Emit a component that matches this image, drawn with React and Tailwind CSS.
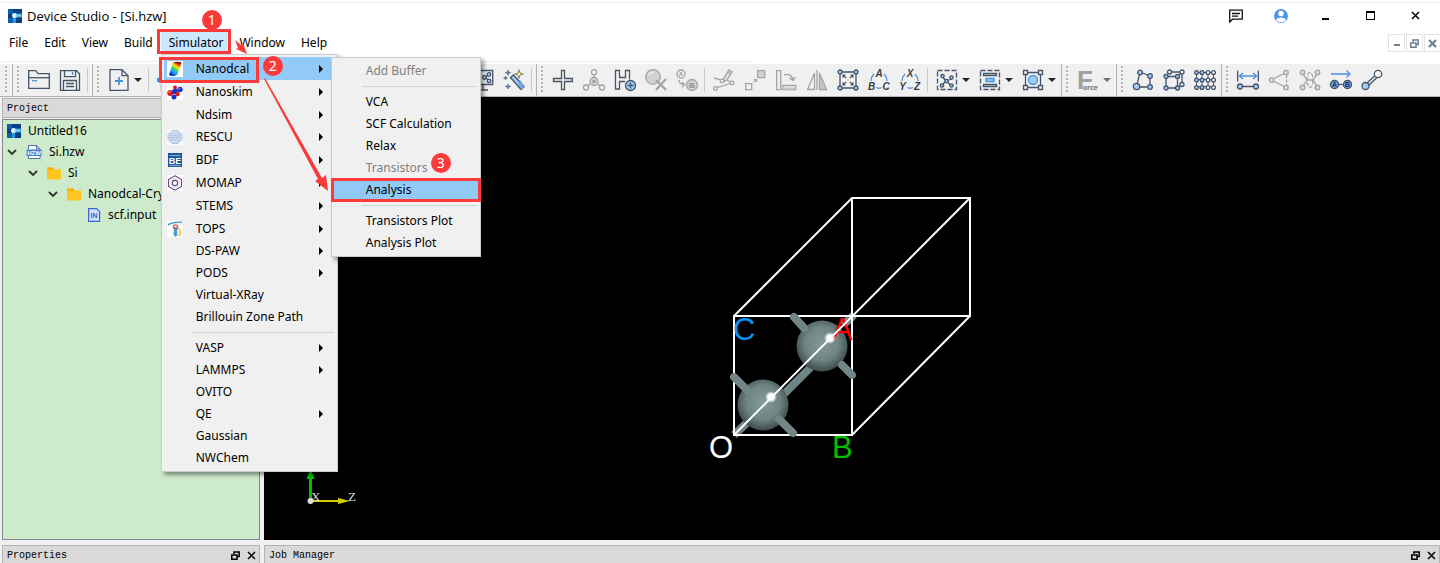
import React, { useState } from 'react';

const INK = '#44546a';
const BLUE = '#4a90e2';
const SKY = '#a3cbf7';
const DIM = '#a3a3a3';

// --- ICONS ---
const Icon = ({ children, size = 22, box = 22, stroke = INK, width = 1.3, label }) => (
  <svg width={size} height={size} viewBox={`0 0 ${box} ${box}`} fill="none" stroke={stroke} strokeWidth={width} className="shrink-0 overflow-visible" role="img" aria-label={label}>
    {children}
  </svg>
);

const Dots = ({ points, r = 2, fill = SKY }) => points.map(([x, y], i) => <circle key={i} cx={x} cy={y} r={r} fill={fill} />);

const LogoIcon = () => (
  <Icon size={14} box={14} stroke="none">
    <rect width="14" height="14" fill="#0a3f86" />
    <path d="M0 0h5v5H0zM0 9h5v5H0z" fill="#0b5ea8" />
    <path d="M5 4.500h9v4H8V14H5z" fill="#2d9bd8" />
    <circle cx="6.500" cy="6.500" r="2.500" fill="#d9f4ff" />
    <path d="M8 5.500h5v2H8z" fill="#7fd0f2" />
  </Icon>
);

const OpenIcon = () => (
  <Icon>
    <path d="M.7 19.300V1.700h7l2.500 3h11.100v14.600z" />
    <path d="M.7 8.700h20.600" />
    <path d="M4 11.700h5" stroke={BLUE} />
  </Icon>
);

const SaveIcon = () => (
  <Icon>
    <path d="M1.500 1.700h16l3 3v16.600h-19z" />
    <path d="M5.500 1.700v6h11v-6M4.500 21v-9.500h13V21M7 14.500h8M7 17.500h8" />
    <path d="M13.500 3v3" stroke={BLUE} width="2" />
  </Icon>
);

const NewIcon = () => (
  <Icon>
    <path d="M2 .7h12l6 6v14.600H2z" />
    <path d="M14 .7v6h6" />
    <path d="M11 8v8M7 12h8" stroke={BLUE} strokeWidth="1.800" />
  </Icon>
);

const ImportIcon = () => (
  <Icon>
    <path d="M0 9h6v4H0z" fill={BLUE} stroke="none" />
    <path d="M4.500 15v6h14V1h-14v5" />
  </Icon>
);

const ScreenIcon = () => (
  <Icon>
    <path d="M1.700 1.500h19v14h-19zM6 21h10M11 16v5" />
    <path d="M13 8.500l4-3M13 8.500l4 3" />
    <Dots points={[[12.500, 8.5], [17, 5.500], [17, 12]]} r={1.8} />
  </Icon>
);

const WandIcon = () => (
  <Icon>
    <path d="M7.500 8.500l3-2.500L21 17.500l-3 3z" fill={SKY} />
    <path d="M15 14l3-2.500 3 6-3 3z" fill="#6da8ea" stroke="none" />
    <path d="M16 .7l1 3.300 3.300 1-3.300 1-1 3.300-1-3.300-3.300-1 3.300-1z" fill="#fff6a8" stroke="#756b4c" strokeWidth=".800" />
    <path d="M5 1l.7 2 2 .7-2 .7L5 6.500l-.7-2-2-.8 2-.7zM2.500 7l.5 1.500 1.500.5-1.500.5-.5 1.500-.5-1.500L.5 9 2 8.500zM5 15l.7 1.700 2 .8-2 .8L5 20l-.7-1.700-2-.8 2-.8z" fill="#5b7fc0" strokeWidth=".500" />
  </Icon>
);

const AddAtomIcon = () => (
  <Icon>
    <path d="M9.500 1.500h3v8h8v3h-8v8h-3v-8h-8v-3h8z" />
  </Icon>
);

const FragmentIcon = () => (
  <Icon stroke={DIM}>
    <path d="M11 6v3M7 15l-2 2M15 15l2 2" />
    <circle cx="11" cy="12.500" r="4" fill="#d5d5d5" />
    <circle cx="11" cy="12.500" r="1.200" fill={DIM} />
    <Dots points={[[11, 3.2], [3, 18.5], [19, 18.5]]} r={2.5} fill="#f4f4f4" />
  </Icon>
);

const HydrogenIcon = () => (
  <Icon>
    <path d="M11 12.500H5.500V20h-4V1.500h4v7h6v-7h4v9" />
    <circle cx="16.500" cy="16.500" r="5" fill={SKY} />
    <path d="M16.500 13.500v6M13.500 16.500h6" />
  </Icon>
);

const DeleteAtomIcon = () => (
  <Icon stroke={DIM}>
    <circle cx="8" cy="8" r="7.300" fill="#d2d2d2" />
    <path d="M4 6a5 5 0 0 1 5-3" stroke="#ececec" strokeWidth="1.500" />
    <path d="M11 11l10 10M21 10L11 21" strokeWidth="2.200" />
  </Icon>
);

const ReplaceIcon = () => (
  <Icon stroke={DIM}>
    <circle cx="5" cy="5" r="4" />
    <path d="M3 11c0 3 2 4.500 5 4.500M6 13l2.500 2.500L6 18" />
    <circle cx="16" cy="16" r="5.500" fill="#d2d2d2" />
    <g fill="#8f8f8f" stroke="none" fontFamily="Liberation Sans, sans-serif" fontWeight="bold" textAnchor="middle">
      <text x="5" y="7" fontSize="6">A</text>
      <text x="16" y="19" fontSize="8">B</text>
    </g>
  </Icon>
);

const BondEditIcon = () => (
  <Icon stroke={DIM}>
    <path d="M3 19l16-5M1 9l8 2 3 1M19 14l-5-3" />
    <path d="M10 13l1-4 5-8 3 2-5 8zM15 3l3 2" fill="#dedede" />
    <Dots points={[[2.500, 19.500], [19, 14], [9, 12]]} r={1.8} fill="#f4f4f4" />
  </Icon>
);

const MoveIcon = () => (
  <Icon stroke={DIM}>
    <path d="M1.700 14.700h6v6h-6z" />
    <path d="M13.700 1.700h7v7h-7z" fill="#d2d2d2" />
    <path d="M9.500 13.500l3-3M10 10.500h2.500V13" strokeWidth="1.100" />
  </Icon>
);

const RotateIcon = () => (
  <Icon stroke={DIM}>
    <path d="M1.700 1.700h4v19h-4zM7.700 16.500h13v4.200h-13z" />
    <path d="M8 18.500h12.500v2H8z" fill="#c8c8c8" stroke="none" />
    <path d="M9 6c5-1.500 8 0 9 5M20.500 8L18 11.500 14.500 9" />
  </Icon>
);

const MirrorIcon = () => (
  <Icon stroke={DIM}>
    <path d="M8.500 4v16.500H1.500z" />
    <path d="M13.500 4v16.500h7z" fill="#c8c8c8" />
    <path d="M11 1v20" />
  </Icon>
);

const FitIcon = () => (
  <Icon>
    <path d="M3 3h16v16H3z" />
    <path d="M9 9L6 6m0 2.500V6h2.500M13 9l3-3m-2.500 0H16v2.500M9 13l-3 3m0-2.500V16h2.500M13 13l3 3m-2.500 0H16v-2.500" strokeWidth="1.200" />
    <Dots points={[[3, 3], [19, 3], [3, 19], [19, 19]]} />
  </Icon>
);

const LetterCycle = ({ letters }) => (
  <Icon>
    <path d="M3 12c0-3 1-5 3-7M19 12c0-3-1-5-3-7M8 18.500c2 1 4 1 6 0" stroke={BLUE} />
    <g fill="#3c3f48" stroke="none" fontFamily="Liberation Sans, sans-serif" fontStyle="italic" fontWeight="bold" fontSize="10" textAnchor="middle">
      <text x="11" y="8">{letters[0]}</text>
      <text x="3.500" y="21">{letters[1]}</text>
      <text x="18" y="21">{letters[2]}</text>
    </g>
  </Icon>
);

const SelectIcon = () => (
  <Icon>
    <rect x="1.500" y="1.500" width="19" height="19" strokeDasharray="5 2" />
    <path d="M10 12L6 7M10 12l6-2M10 12l-4 4M10 12l5 4.500M16 10l-1-3" />
    <Dots points={[[6.500, 7], [10.500, 12], [15.500, 8.500], [6, 16.500], [15.500, 16.500]]} r={1.700} />
  </Icon>
);

const AlignIcon = () => (
  <Icon>
    <rect x="1.500" y="1.500" width="19" height="19" strokeDasharray="5 2" />
    <path d="M4.500 4.500h13v2h-13zM4.500 15.500h13v2h-13z" fill="#f4f4f4" />
    <path d="M7 9.500h8v3H7z" fill={SKY} stroke={BLUE} />
  </Icon>
);

const BoundsIcon = () => (
  <Icon>
    <path d="M3.500 3.500h15v15h-15z" />
    <path d="M1.500 1.500h4v4h-4zM16.500 1.500h4v4h-4zM1.500 16.500h4v4h-4zM16.500 16.500h4v4h-4z" fill="#f4f4f4" />
    <circle cx="11" cy="11" r="4.500" fill={SKY} stroke={BLUE} />
  </Icon>
);

const ForceIcon = () => (
  <Icon stroke="none">
    <text x="0" y="20" fill="#a0a0a0" fontFamily="Liberation Sans, sans-serif" fontWeight="bold" fontSize="26">
      F<tspan dx="-10" dy="1" fontSize="7" fontStyle="italic" fill="#6f6f6f">orce</tspan>
    </text>
  </Icon>
);

const ClusterIcon = () => (
  <Icon>
    <path d="M8 3l10 4v11H4.500z" />
    <Dots points={[[8, 3.500], [18, 7], [18, 18]]} r={2.300} />
    <circle cx="4.500" cy="17.500" r="3.200" fill={SKY} />
  </Icon>
);

const CrystalIcon = () => (
  <Icon>
    <path d="M3 7.500h11.500V19H3zM7 3h12v11.500M14.500 7.500L19 3M14.500 19l4.500-3" />
    <Dots points={[[6.500, 3], [19, 3], [19, 15.500]]} fill="#f4f4f4" />
    <Dots points={[[3, 7.500], [14.500, 7.500], [3, 19], [14.500, 19]]} />
  </Icon>
);

const SuperCellIcon = () => (
  <Icon>
    <path d="M2.500 3.500h16M2.500 10.500h16M2.500 17.500h16M2.500 3v15M8 3v15M14 3v15M19.500 3v15" strokeWidth="1" />
    <Dots points={[[2.500, 3.500], [8, 3.500], [2.500, 11], [8, 11], [2.500, 18.500], [8, 18.500]]} r={1.900} />
    <Dots points={[[14, 3.500], [19.500, 3.500], [14, 11], [19.500, 11], [14, 18.500], [19.500, 18.500]]} r={1.900} fill="#fff" />
  </Icon>
);

const DistanceIcon = () => (
  <Icon>
    <path d="M.7 1.500v11M21.300 1.500v11M3 17.500h16" />
    <path d="M2.500 7h17M6 4L2.500 7 6 10M16 4l3.500 3-3.500 3" stroke={BLUE} />
    <Dots points={[[3, 17.500], [19, 17.500]]} r={2.500} />
  </Icon>
);

const AngleIcon = () => (
  <Icon stroke={DIM}>
    <path d="M3 11l15-7.500M3 11l15 7.500" />
    <path d="M18.500 6v10" strokeDasharray="3 1.500" />
    <Dots points={[[3.500, 11], [18, 3.500], [18, 18.500]]} r={2.200} fill="#e2e2e2" />
  </Icon>
);

const TorsionIcon = () => (
  <Icon stroke={DIM}>
    <path d="M3 3.500l5 7.500h6l5-7.500M3 18.500L8 11M14 11l5 7.500" />
    <ellipse cx="11" cy="11" rx="3" ry="7.500" strokeDasharray="4 1.500" />
    <Dots points={[[3.500, 3.500], [18.500, 3.500], [3.500, 18.500], [18.500, 18.500]]} r={2.300} fill="#d8d8d8" />
  </Icon>
);

const VectorIcon = () => (
  <Icon>
    <path d="M1 5h19M16.500 1.500L20 5l-3.500 3.500" stroke={BLUE} />
    <path d="M8 15.500h6" />
    <circle cx="4.500" cy="15.500" r="4" fill="#6aa9ec" />
    <circle cx="17.500" cy="15.500" r="4" fill="#6aa9ec" />
    <g fill="#26344c" stroke="none" fontFamily="Liberation Sans, sans-serif" fontWeight="bold" fontSize="7" textAnchor="middle">
      <text x="4.500" y="18">A</text>
      <text x="17.500" y="18">B</text>
    </g>
  </Icon>
);

const BondIcon = () => (
  <Icon>
    <path d="M5 15L15 5.500M7 17L17 7.500" />
    <circle cx="4.500" cy="17" r="3.500" fill={SKY} />
    <circle cx="17" cy="5" r="3.700" fill="#f8f8f8" />
  </Icon>
);

const RestoreIcon = ({ color = '#000' }) => (
  <Icon size={9} box={9} stroke={color} width={1.5}>
    <path d="M3 3V1h5.200v4.500H6M.8 4h5.200v4.200H.8z" />
  </Icon>
);

const CloseIcon = ({ color = '#000', width = 1.5 }) => (
  <Icon size={9} box={9} stroke={color} width={width}>
    <path d="M1 1l7 7M8 1L1 8" />
  </Icon>
);

// --- MENU ICONS ---
const NanodcalIcon = () => (
  <Icon size={16} box={16} stroke="none">
    <defs>
      <linearGradient id="tube" x1=".9" y1="0" x2=".2" y2="1">
        <stop offset="0" stopColor="#8c0000" />
        <stop offset=".2" stopColor="#ff3c00" />
        <stop offset=".38" stopColor="#ffe600" />
        <stop offset=".55" stopColor="#35d76b" />
        <stop offset=".75" stopColor="#1a9cff" />
        <stop offset="1" stopColor="#0000a8" />
      </linearGradient>
    </defs>
    <rect width="16" height="16" fill="#fff" />
    <path d="M6 1.500Q11 .2 14.500 1.500L10 14Q6 16 2 14z" fill="url(#tube)" />
    <path d="M6.500 1.500q4-1.200 7.500.3-3 1.500-7.500-.3z" fill="#6b1200" />
  </Icon>
);

const NanoskimIcon = () => (
  <Icon size={16} box={16} stroke="none">
    <rect width="16" height="16" fill="#fff" />
    <circle cx="8" cy="3.500" r="2" fill="#e01818" />
    <circle cx="3.200" cy="9" r="3" fill="#e01818" />
    <circle cx="8" cy="7.500" r="2.800" fill="#1631c8" />
    <circle cx="13" cy="5.500" r="2.700" fill="#1631c8" />
    <circle cx="10.500" cy="10" r="2.200" fill="#e01818" />
    <circle cx="7" cy="13" r="2.500" fill="#1631c8" />
    <circle cx="2.500" cy="8" r=".9" fill="#ff9c9c" />
    <circle cx="12.500" cy="4.500" r=".8" fill="#94a8ff" />
  </Icon>
);

const RescuIcon = () => (
  <Icon size={16} box={16} stroke="#a9bfdf" width={0.9}>
    <rect width="16" height="16" fill="#f6f9fd" stroke="none" />
    <path d="M5 1.500h6l4 4v5l-4 4H5l-4-4v-5z" fill="#dce7f5" />
    <path d="M2 6h12M2 8.500h12M3 11h10M5 4h6l2 3v4l-3 3H6l-3-3V7z" />
    <circle cx="8" cy="9" r="2.500" />
  </Icon>
);

const BdfIcon = () => (
  <Icon size={16} box={16} stroke="none">
    <rect x="1" y="1" width="14" height="14" fill="#17529b" />
    <path d="M2.500 3.500h11" stroke="#7ea5d6" />
    <text x="8" y="12" fill="#fff" fontFamily="Liberation Sans, sans-serif" fontWeight="bold" fontSize="9" textAnchor="middle">BE</text>
    <path d="M2.500 13.500h11" stroke="#7ea5d6" />
  </Icon>
);

const MomapIcon = () => (
  <Icon size={16} box={16} stroke="#6a4a7c" width={1.1}>
    <rect width="16" height="16" fill="#fff" stroke="none" />
    <path d="M8 .8l6.500 3.700v7L8 15.200 1.500 11.500v-7z" />
    <circle cx="8" cy="8" r="4.200" stroke="#cdbfd4" strokeWidth=".800" />
    <circle cx="8" cy="8" r="2.600" />
  </Icon>
);

const TopsIcon = () => (
  <Icon size={16} box={16} stroke="none">
    <rect width="16" height="16" fill="#fff" />
    <path d="M1 4c4-3 9-3 14-2.500" stroke="#4b9fd8" strokeWidth="1.600" />
    <path d="M7 6h3l.5 8-2 2-2-2z" fill="#4b9fd8" />
    <circle cx="8.500" cy="6" r="2.200" stroke="#d9534f" strokeWidth="1.200" />
    <path d="M11 8c3 0 3 2.500 1 3 3 .5 2 3.500-1 3.500" stroke="#f0c04a" strokeWidth="1.300" />
  </Icon>
);

// --- DATA ---
const MENUS_LEFT = ['File', 'Edit', 'View', 'Build'];
const MENUS_RIGHT = ['Window', 'Help'];

const SIMULATORS = [
  { name: 'Nanodcal', icon: NanodcalIcon, sub: true, tall: true },
  { name: 'Nanoskim', icon: NanoskimIcon, sub: true, tall: true },
  { name: 'Ndsim', sub: true, tall: true },
  { name: 'RESCU', icon: RescuIcon, sub: true },
  { name: 'BDF', icon: BdfIcon, sub: true, tall: true },
  { name: 'MOMAP', icon: MomapIcon, sub: true, tall: true },
  { name: 'STEMS', sub: true, tall: true },
  { name: 'TOPS', icon: TopsIcon, sub: true, tall: true },
  { name: 'DS-PAW', sub: true },
  { name: 'PODS', sub: true },
  { name: 'Virtual-XRay' },
  { name: 'Brillouin Zone Path' },
  null,
  { name: 'VASP', sub: true },
  { name: 'LAMMPS', sub: true },
  { name: 'OVITO' },
  { name: 'QE', sub: true },
  { name: 'Gaussian' },
  { name: 'NWChem' },
];

const NANODCAL_ITEMS = [
  { name: 'Add Buffer', disabled: true },
  null,
  { name: 'VCA' },
  { name: 'SCF Calculation' },
  { name: 'Relax' },
  { name: 'Transistors', disabled: true },
  { name: 'Analysis', marked: true },
  null,
  { name: 'Transistors Plot' },
  { name: 'Analysis Plot' },
];

// --- TOOLBAR ---
const Grip = () => <span className="mx-1 h-7 w-0.5 bg-[repeating-linear-gradient(to_bottom,#b4b4b4_0_2px,transparent_2px_4px)]" />;
const Divider = () => <span className="ml-0.5 mr-[3px] h-6 w-px bg-[#c8c8c8]" />;

const Tool = ({ label, children, menu, disabled }) => (
  <button type="button" aria-label={label} disabled={disabled} className="flex h-8 shrink-0 items-center">
    <span className="flex w-[31px] justify-center">{children}</span>
    {menu && <span className={`mr-1 h-0 w-2 border-x-4 border-t-4 border-x-transparent ${disabled ? 'border-t-[#6f6f6f]' : 'border-t-[#222]'}`} />}
  </button>
);

const ToolGroup = ({ children, className = '' }) => (
  <div className={`flex shrink-0 items-center border-r border-[#b0b0b0] pr-px ${className}`}>
    <Grip />
    {children}
  </div>
);

const Toolbar = () => (
  <div className="flex h-[33px] shrink-0 overflow-hidden border-b border-[#b0b0b0] bg-[#f0f0f0] pl-px">
    <ToolGroup />
    <ToolGroup>
      <Tool label="Open"><OpenIcon /></Tool>
      <Tool label="Save"><SaveIcon /></Tool>
      <Divider />
    </ToolGroup>
    <ToolGroup className="w-[444px]">
      <Tool label="New" menu><NewIcon /></Tool>
      <Divider />
      <Tool label="Import"><ImportIcon /></Tool>
      <span className="flex-1" />
      <Tool label="Display"><ScreenIcon /></Tool>
      <Tool label="Clean"><WandIcon /></Tool>
      <Divider />
    </ToolGroup>
    <ToolGroup>
      <Tool label="Add atom"><AddAtomIcon /></Tool>
      <Tool label="Add fragment" disabled><FragmentIcon /></Tool>
      <Tool label="Add hydrogen"><HydrogenIcon /></Tool>
      <Tool label="Delete atom" disabled><DeleteAtomIcon /></Tool>
      <Tool label="Replace atom" disabled><ReplaceIcon /></Tool>
      <Divider />
      <Tool label="Edit bond" disabled><BondEditIcon /></Tool>
      <Tool label="Move" disabled><MoveIcon /></Tool>
      <Tool label="Rotate" disabled><RotateIcon /></Tool>
      <Tool label="Mirror" disabled><MirrorIcon /></Tool>
      <Tool label="Fit"><FitIcon /></Tool>
      <Tool label="Lattice axes"><LetterCycle letters="ABC" /></Tool>
      <Tool label="Cartesian axes"><LetterCycle letters="XYZ" /></Tool>
      <Divider />
      <Tool label="Select" menu><SelectIcon /></Tool>
      <Tool label="Align" menu><AlignIcon /></Tool>
      <Tool label="Bounds" menu><BoundsIcon /></Tool>
    </ToolGroup>
    <ToolGroup>
      <Tool label="Force field" menu disabled><ForceIcon /></Tool>
    </ToolGroup>
    <ToolGroup>
      <Tool label="Cluster"><ClusterIcon /></Tool>
      <Tool label="Crystal"><CrystalIcon /></Tool>
      <Tool label="Supercell"><SuperCellIcon /></Tool>
    </ToolGroup>
    <div className="flex items-center">
      <Grip />
      <Tool label="Distance"><DistanceIcon /></Tool>
      <Tool label="Angle" disabled><AngleIcon /></Tool>
      <Tool label="Torsion" disabled><TorsionIcon /></Tool>
      <Tool label="Vector"><VectorIcon /></Tool>
      <Tool label="Bond"><BondIcon /></Tool>
    </div>
  </div>
);

// --- MENUS ---
const Step = ({ n, className }) => (
  <span className={`pointer-events-none absolute z-40 flex size-5 items-center justify-center rounded-full bg-[#fb3a3a] text-sm leading-5 text-white ${className}`}>{n}</span>
);

const Frame = ({ className }) => <span className={`pointer-events-none absolute z-30 border-3 border-[#fb3a3a] ${className}`} />;

const SubMenu = () => (
  <ul className="absolute left-full top-0 z-20 -ml-1 w-[150px] border border-[#ccc] bg-[#f0f0f0] p-0.5 shadow-[3px_3px_4px_rgba(0,0,0,0.4)]">
    {NANODCAL_ITEMS.map((item, i) => item === null ? (
      <li key={i} className="mb-1 ml-7 mr-px mt-1 h-px bg-[#d4d4d4]" />
    ) : (
      <li key={item.name} className="relative">
        <button type="button" disabled={item.disabled} className={`block h-[22px] w-full pl-8 text-left ${item.marked ? 'bg-[#91c9f7]' : ''} ${item.disabled ? 'text-[#808080]' : 'text-black'}`}>
          {item.name}
        </button>
        {item.marked && <Frame className="-inset-x-[3px] -inset-y-px" />}
        {item.marked && <Step n={3} className="-top-[26px] left-[97px]" />}
      </li>
    ))}
  </ul>
);

const SimulatorMenu = ({ active, setActive }) => (
  <ul className="absolute left-0 top-[22px] z-20 w-[177px] border border-[#ccc] bg-[#f0f0f0] p-0.5 shadow-[3px_3px_4px_rgba(0,0,0,0.4)]">
    {SIMULATORS.map((item, i) => {
      if (item === null) return <li key={i} className="mb-1 ml-7 mr-px mt-1 h-px bg-[#d4d4d4]" />;
      const MenuIcon = item.icon;
      const isActive = item.name === active;
      return (
        <li key={item.name} className="relative">
          <button type="button" onClick={() => setActive(item.name)} className={`flex w-full items-center pl-[3px] text-left ${item.tall ? 'h-[23px]' : 'h-[22px]'} ${isActive ? 'bg-[#91c9f7]' : ''}`}>
            <span className="w-[29px] shrink-0">{MenuIcon && <MenuIcon />}</span>
            <span className="flex-1 whitespace-nowrap">{item.name}</span>
            {item.sub && <span className="mr-3 h-2 w-1 border-y-4 border-l-4 border-y-transparent border-l-black" />}
          </button>
          {item.name === 'Nanodcal' && <Frame className="-left-[5px] top-0 h-[26px] w-[100px]" />}
          {item.name === 'Nanodcal' && <Step n={2} className="-top-px left-[99px]" />}
          {item.name === 'Nanodcal' && isActive && <SubMenu />}
        </li>
      );
    })}
  </ul>
);

const Arrows = () => (
  <svg width="110" height="160" viewBox="0 0 110 160" fill="#f93c3a" className="pointer-events-none absolute left-[70px] top-1 z-30">
    <path d="M4 4l6 5 2-2 4 11-11-5 2-1z" />
    <path d="M34 42l57 100 4-3 2 16-13-10 3-2L33 43z" />
  </svg>
);

const MenuBar = () => {
  const [active, setActive] = useState('Nanodcal');
  return (
    <div className="flex h-8 shrink-0 flex-col justify-between pb-0.5">
      <div className="flex items-start">
        <nav className="flex h-[22px] pl-px">
          {MENUS_LEFT.map((name) => <button key={name} type="button" className="px-2">{name}</button>)}
          <div className="relative flex">
            <button type="button" className="bg-[#cce8ff] px-2">Simulator</button>
            <Frame className="-left-1 -top-[3px] bottom-0 right-0" />
            <Step n={1} className="-top-[22px] left-[41px]" />
            <Arrows />
            <SimulatorMenu active={active} setActive={setActive} />
          </div>
          {MENUS_RIGHT.map((name) => <button key={name} type="button" className="px-2">{name}</button>)}
        </nav>
        <div className="-mr-px ml-auto mt-0.5 flex gap-px">
          <button type="button" aria-label="Minimize document" className="flex h-[18px] w-[17px] items-center justify-center border border-[#e3e3e3]"><span className="mt-1 h-0.5 w-1.5 bg-[#6f7f8f]" /></button>
          <button type="button" aria-label="Restore document" className="flex h-[18px] w-[17px] items-center justify-center border border-[#e3e3e3]"><RestoreIcon color="#6f7f8f" /></button>
          <button type="button" aria-label="Close document" className="flex h-[18px] w-[17px] items-center justify-center border border-[#e3e3e3]"><CloseIcon color="#6f7f8f" width={2.2} /></button>
        </div>
      </div>
      <div className="ml-0.5 h-px w-[52%] bg-[#ececec]" />
    </div>
  );
};

const TitleBar = () => (
  <div className="flex h-8 shrink-0 flex-col pt-0.5">
    <div className="ml-0.5 h-px bg-[#ececec]" />
    <div className="flex flex-1 items-center pb-1 pl-2 pr-0.5">
      <LogoIcon />
      <h1 className="ml-[5px] flex-1 font-['Open_Sans',sans-serif] text-[13px]">Device Studio - [Si.hzw]</h1>
      <button type="button" aria-label="Messages" className="flex w-[45px] justify-center">
        <Icon size={14} box={14} stroke="#111"><path d="M.7 13V1.200h12.600v9H3.500zM3 4.500h8M3 7.200h6" /></Icon>
      </button>
      <button type="button" aria-label="Account" className="flex w-[45px] justify-center">
        <Icon size={14} box={14} stroke="none">
          <circle cx="7" cy="7" r="7" fill="#4f97e3" />
          <circle cx="7" cy="4.500" r="2.700" fill="#fff" />
          <path d="M2 11c.5-3.500 9.500-3.500 10 0-2.500 3-7.500 3-10 0z" fill="#fff" />
        </Icon>
      </button>
      <button type="button" aria-label="Minimize" className="flex w-[45px] justify-center"><span className="mt-1.5 h-0.5 w-[7px] bg-black" /></button>
      <button type="button" aria-label="Maximize" className="flex w-[45px] justify-center"><span className="size-[9px] border border-t-2 border-black" /></button>
      <button type="button" aria-label="Close" className="flex w-[45px] justify-center"><CloseIcon /></button>
    </div>
  </div>
);

// --- PANELS ---
const PanelHeader = ({ title, controls }) => (
  <div className="flex h-5 shrink-0 items-center border border-[#b4b4b4] bg-[#d9d9d9] pl-1 font-['Liberation_Mono',monospace] text-[10px]">
    <h2 className="flex-1 pt-0.5">{title}</h2>
    {controls && <button type="button" aria-label={`Float ${title}`} className="flex w-4 justify-center"><RestoreIcon /></button>}
    {controls && <button type="button" aria-label={`Close ${title}`} className="flex w-4 justify-center"><CloseIcon /></button>}
  </div>
);

const Chevron = () => (
  <Icon size={10} box={10} stroke="#333" width={1.8}><path d="M1 3l4 4 4-4" /></Icon>
);

const FolderIcon = () => (
  <Icon size={14} box={14} stroke="none"><path d="M0 1.500h6l1.500 2H14v10H0z" fill="#ffc41f" /><path d="M0 1.500h6l1.500 2H0z" fill="#ffa800" /></Icon>
);

const HzwIcon = () => (
  <Icon size={16} box={16} stroke="#52709c" width={1}>
    <path d="M2.500 5V1.500h8L14 5v9.500H2.500V12" fill="#fff" />
    <path d="M10.500 1.500V5H14" />
    <rect x=".5" y="5.500" width="15" height="6.500" fill="#3f83d6" stroke="none" />
    <text x="8" y="11" fill="#fff" stroke="none" fontFamily="Liberation Sans, sans-serif" fontWeight="bold" fontSize="6" textAnchor="middle">HZW</text>
  </Icon>
);

const InputFileIcon = () => (
  <Icon size={14} box={14} stroke="#3a66dc" width={1.2}>
    <path d="M1.600.7h8l3 3v9.600h-11z" fill="#d4defa" />
    <text x="7" y="10" fill="#3a66dc" stroke="none" fontFamily="Liberation Sans, sans-serif" fontWeight="bold" fontSize="7" textAnchor="middle">IN</text>
  </Icon>
);

const TreeRow = ({ indent, icon, open, children }) => (
  <li className={`flex h-[21px] items-center whitespace-nowrap ${indent}`}>
    {open && <span className="mr-2 flex w-3 justify-center"><Chevron /></span>}
    {icon}
    <span className="ml-[7px]">{children}</span>
  </li>
);

const ProjectPanel = () => (
  <aside className="flex w-[258px] shrink-0 flex-col pt-px">
    <PanelHeader title="Project" />
    <ul className="mt-px min-h-0 flex-1 border border-[#828790] bg-[#cdeacb]">
      <TreeRow indent="pl-1" icon={<LogoIcon />}>Untitled16</TreeRow>
      <TreeRow indent="pl-[3px]" icon={<HzwIcon />} open>Si.hzw</TreeRow>
      <TreeRow indent="pl-6" icon={<FolderIcon />} open>Si</TreeRow>
      <TreeRow indent="pl-11" icon={<FolderIcon />} open>Nanodcal-Crystal</TreeRow>
      <TreeRow indent="pl-[84px]" icon={<InputFileIcon />}>scf.input</TreeRow>
    </ul>
  </aside>
);

// Primitive cell of silicon with its two atoms
const Viewport = () => (
  <main className="relative flex min-w-0 flex-1 items-center justify-center overflow-hidden bg-black">
    <svg width="300" height="290" viewBox="-1 -6 300 290" fill="none" className="shrink-0">
      <defs>
        <radialGradient id="atom" cx=".5" cy=".45" r=".55">
          <stop offset="0" stopColor="#83999a" />
          <stop offset=".6" stopColor="#6f8585" />
          <stop offset="1" stopColor="#3d4a4b" />
        </radialGradient>
        <radialGradient id="glow">
          <stop offset="0" stopColor="#fff" />
          <stop offset=".5" stopColor="#fff" />
          <stop offset="1" stopColor="#fff" stopOpacity="0" />
        </radialGradient>
      </defs>
      <g stroke="#6f8485" strokeWidth="8">
        <path d="M31 255l20-19M69 226l50-50M140 145l11-10" />
      </g>
      <path d="M31 136L149 18h118v118H31v119h118V18M149 255l118-119" stroke="#fff" strokeWidth="2" />
      <circle cx="60" cy="225" r="25.500" fill="url(#atom)" />
      <circle cx="119" cy="166" r="25.500" fill="url(#atom)" />
      <g stroke="#718687" strokeWidth="8" strokeLinecap="round">
        <path d="M31 197l14 14M76 239l14 14M139 185l10 10M91 137l10 11" />
      </g>
      <g fontFamily="Liberation Sans, sans-serif" fontSize="31">
        <text x="6" y="278" fill="#fff">O</text>
        <text x="30" y="160" fill="#0a92f5">C</text>
        <text x="129" y="160" fill="#f00">A</text>
        <text x="129" y="278" fill="#00c000">B</text>
      </g>
      <path d="M31 255L267 18" stroke="#fff" strokeWidth="2" />
      <circle cx="68" cy="217" r="6" fill="url(#glow)" />
      <circle cx="127" cy="158" r="6" fill="url(#glow)" />
    </svg>
    <svg width="60" height="80" viewBox="0 0 60 80" className="absolute bottom-[27px] left-10">
      <path d="M6.500 44v24" stroke="#00c000" strokeWidth="3" />
      <path d="M6.500 36l4 10h-8z" fill="#00c000" />
      <path d="M8 68h26" stroke="#d6cf00" strokeWidth="2" />
      <path d="M34 65l12 3-12 3z" fill="#d6cf00" />
      <circle cx="6.500" cy="68" r="3" fill="#ddd" />
      <g fill="#ddd" fontFamily="Liberation Serif, serif" fontSize="13">
        <text x="7" y="68">X</text>
        <text x="44" y="68">Z</text>
      </g>
    </svg>
  </main>
);

const App = () => (
  <div className="flex h-screen flex-col overflow-hidden bg-white font-['Noto_Sans',sans-serif] text-xs leading-[22px] text-black">
    <TitleBar />
    <MenuBar />
    <Toolbar />
    <div className="flex min-h-0 flex-1 gap-1 bg-[#f0f0f0] pl-0.5">
      <ProjectPanel />
      <Viewport />
    </div>
    <footer className="flex h-[23px] shrink-0 gap-1 overflow-hidden bg-[#f0f0f0] pl-0.5 pt-[5px]">
      <div className="w-[258px] shrink-0"><PanelHeader title="Properties" controls /></div>
      <div className="flex-1"><PanelHeader title="Job Manager" controls /></div>
    </footer>
  </div>
);

export default App;
